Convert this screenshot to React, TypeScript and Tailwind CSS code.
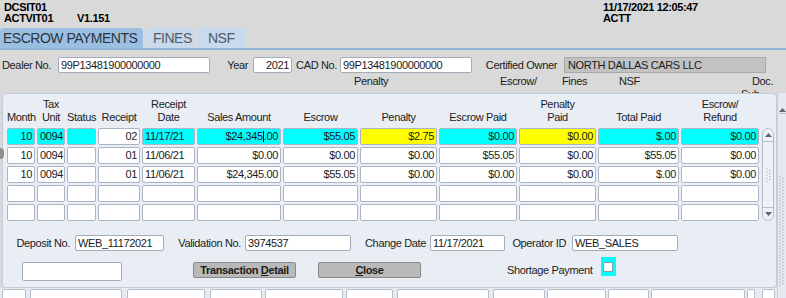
const CYAN = 'bg-[#00ffff]';
const YEL = 'bg-[#ffff00]';
const WHITE = 'bg-white';

type Row = string[];

const rows: Row[] = [
  ['10', '0094', '', '02', '11/17/21', '$24,345.00', '$55.05', '$2.75', '$0.00', '$0.00', '$.00', '$0.00'],
  ['10', '0094', '', '01', '11/06/21', '$0.00', '$0.00', '$0.00', '$55.05', '$0.00', '$55.05', '$0.00'],
  ['10', '0094', '', '01', '11/06/21', '$24,345.00', '$55.05', '$0.00', '$0.00', '$0.00', '$.00', '$0.00'],
  ['', '', '', '', '', '', '', '', '', '', '', ''],
  ['', '', '', '', '', '', '', '', '', '', '', ''],
];

const activeBg = [CYAN, CYAN, CYAN, WHITE, CYAN, CYAN, CYAN, YEL, CYAN, YEL, CYAN, CYAN];
const leftCols = [1, 4];

const headers: [string, string][] = [
  ['', 'Month'],
  ['Tax', 'Unit'],
  ['', 'Status'],
  ['', 'Receipt'],
  ['Receipt', 'Date'],
  ['', 'Sales Amount'],
  ['', 'Escrow'],
  ['', 'Penalty'],
  ['', 'Escrow Paid'],
  ['Penalty', 'Paid'],
  ['', 'Total Paid'],
  ['Escrow/', 'Refund'],
];

const strip = [
  'ml-[2px] w-[24px]',
  'ml-[4px] w-[92px]',
  'ml-[5px] w-[78px]',
  'ml-[5px] w-[52px]',
  'ml-[3px] w-[78px]',
  'ml-[3px] w-[47px]',
  'ml-[4px] w-[92px]',
  'ml-[4px] w-[52px]',
  'ml-[2px] w-[59px]',
  'ml-[2px] w-[41px]',
  'ml-[2px] w-[94px]',
  'ml-[2px] w-[8px]',
  'ml-[7px] w-[13px]',
];

const input = 'h-[16px] rounded-[2px] border border-[#a3acb8] bg-white px-[2px] leading-[14px]';

function Arrow({ up }: { up?: boolean }) {
  return (
    <svg width="7" height="4" viewBox="0 0 7 4">
      <path d={up ? 'M0 4 L3.5 0 L7 4 Z' : 'M0 0 L3.5 4 L7 0 Z'} fill="#5a6675" />
    </svg>
  );
}

function Grip({ h }: { h: number }) {
  const dots = [];
  for (let y = 1; y < h; y += 3) {
    dots.push(<circle key={'a' + y} cx="1" cy={y} r="0.7" fill="#aab3bf" />);
    dots.push(<circle key={'b' + y} cx="4" cy={y + 1.5} r="0.7" fill="#aab3bf" />);
  }
  return (
    <svg width="6" height={h}>
      {dots}
    </svg>
  );
}

function Cell({ text, idx, row }: { text: string; idx: number; row: number }) {
  const bg = row === 0 ? activeBg[idx] : WHITE;
  const align = leftCols.includes(idx) ? 'text-left pl-[2px]' : 'text-right pr-[2px]';
  const isCursor = row === 0 && idx === 5;
  return (
    <div className={`h-[17px] rounded-[2px] border border-[#aab4c2] leading-[15px] ${bg} ${align}`}>
      {isCursor ? (
        <>
          $24,345<span className="inline-block h-[11px] w-px bg-black align-[-2px]" />.00
        </>
      ) : (
        text
      )}
    </div>
  );
}

export default function App() {
  return (
    <div className="relative h-[298px] w-[786px] overflow-hidden bg-[#d9d9d9] font-['Liberation_Sans',Arial,sans-serif] text-[11px] tracking-[-0.35px] text-[#1b1b1b]">
      {/* header */}
      <div className="flex h-[28px] pt-[2px] font-bold leading-[11px] text-black">
        <div className="w-[603px] pl-[4px]">
          <div>DCSIT01</div>
          <div className="flex">
            <span className="w-[73px]">ACTVIT01</span>
            <span>V1.151</span>
          </div>
        </div>
        <div>
          <div>11/17/2021 12:05:47</div>
          <div>ACTT</div>
        </div>
      </div>

      {/* tabs */}
      <div className="flex h-[22px] items-end gap-[3px] border-b-2 border-[#8fb3d6] text-[14px] tracking-[-0.5px]">
        <div className="h-[20px] w-[143px] rounded-t-[4px] bg-[#9bbfe0] pl-[3px] leading-[21px] text-[#2b3440]">
          ESCROW PAYMENTS
        </div>
        <div className="h-[20px] w-[48px] rounded-t-[4px] bg-[#c7daee] pl-[7px] leading-[21px] text-[#505a66]">
          FINES
        </div>
        <div className="h-[20px] w-[48px] rounded-t-[4px] bg-[#c7daee] pl-[11px] leading-[21px] text-[#505a66]">
          NSF
        </div>
      </div>

      {/* header form */}
      <div className="h-[43px] overflow-hidden">
        <div className="mt-[7px] flex h-[16px] items-center">
          <div className="w-[58px] pl-[2px]">Dealer No.</div>
          <div className={`${input} w-[152px]`}>99P13481900000000</div>
          <div className="w-[43px] pr-[5px] text-right">Year</div>
          <div className={`${input} w-[39px] text-right`}>2021</div>
          <div className="w-[48px] pr-[3px] text-right">CAD No.</div>
          <div className={`${input} w-[132px]`}>99P13481900000000</div>
          <div className="w-[92px] pr-[7px] text-right">Certified Owner</div>
          <div className="h-[16px] w-[202px] border border-[#a9a9a9] bg-[#c2c2c2] pl-[3px] leading-[14px]">
            NORTH DALLAS CARS LLC
          </div>
        </div>
        <div className="mt-[2px] flex pl-[354px] leading-[13px]">
          <span className="w-[146px]">Penalty</span>
          <span className="w-[62px]">Escrow/</span>
          <span className="w-[57px]">Fines</span>
          <span className="w-[133px]">NSF</span>
          <span>Doc.</span>
        </div>
        <div className="pl-[741px] leading-[13px]">Sub-</div>
      </div>

      {/* body */}
      <div className="flex h-[205px]">
        <div className="w-[777px]">
          <div className="ml-[2px] h-[195px] w-[775px] rounded-[4px] border border-[#c2ccd9] bg-[#e9eef5]">
            {/* grid headers */}
            <div className="ml-[4px] mt-[4px] grid h-[26px] grid-cols-[28px_28px_29px_42px_53px_84px_75px_77px_78px_77px_81px_78px] items-end gap-x-[2px] text-center leading-[13px]">
              {headers.map(([a, b], i) => (
                <div key={i}>
                  {a && <div>{a}</div>}
                  <div className="whitespace-nowrap">{b}</div>
                </div>
              ))}
            </div>

            {/* grid rows */}
            <div className="ml-[4px] mt-[4px] grid auto-rows-[17px] grid-cols-[28px_28px_29px_42px_53px_84px_75px_77px_78px_77px_81px_78px_13px] gap-x-[2px] gap-y-[2px]">
              <div className="col-start-13 row-span-5 row-start-1 ml-[1px] flex flex-col rounded-[6px] border border-[#b3bdcb] bg-[#eef2f7]">
                <div className="flex h-[13px] items-center justify-center border-b border-[#b3bdcb]">
                  <Arrow up />
                </div>
                <div className="flex flex-1 items-center justify-end pr-[1px]">
                  <Grip h={14} />
                </div>
                <div className="flex h-[13px] items-center justify-center border-t border-[#b3bdcb]">
                  <Arrow />
                </div>
              </div>
              {rows.map((r, ri) => r.map((t, ci) => <Cell key={ri + '-' + ci} text={t} idx={ci} row={ri} />))}
            </div>

            {/* footer fields */}
            <div className="mt-[14px] flex h-[16px] items-center">
              <div className="w-[72px] pr-[5px] text-right">Deposit No.</div>
              <div className={`${input} w-[89px]`}>WEB_11172021</div>
              <div className="w-[81px] pr-[4px] text-right">Validation No.</div>
              <div className={`${input} w-[106px]`}>3974537</div>
              <div className="w-[79px] pr-[4px] text-right">Change Date</div>
              <div className={`${input} w-[75px]`}>11/17/2021</div>
              <div className="w-[67px] pr-[6px] text-right">Operator ID</div>
              <div className={`${input} w-[106px]`}>WEB_SALES</div>
            </div>
            <div className="mt-[6px] flex items-start">
              <div className="ml-[19px] mt-[5px] h-[19px] w-[100px] rounded-[2px] border border-[#a3acb8] bg-white" />
              <button className="ml-[71px] mt-[5px] h-[16px] w-[103px] rounded-[2px] border border-[#8a8a8a] bg-[#b9b9b9] text-center font-bold leading-[14px] tracking-[-0.35px] text-[#1b1b1b]">
                Transaction <span className="underline">D</span>etail
              </button>
              <button className="ml-[22px] mt-[5px] h-[16px] w-[103px] rounded-[2px] border border-[#8a8a8a] bg-[#b9b9b9] text-center font-bold leading-[14px] tracking-[-0.35px] text-[#1b1b1b]">
                <span className="underline">C</span>lose
              </button>
              <div className="ml-[86px] mt-[7px] leading-[13px]">Shortage Payment</div>
              <div className="ml-[8px] flex h-[19px] w-[15px] items-center justify-center bg-[#00ffff]">
                <div className="h-[10px] w-[10px] rounded-[1px] border border-[#8c96a3] bg-white" />
              </div>
            </div>
          </div>

          {/* partial grid below */}
          <div className="flex h-[10px] bg-[#e6ebf2]">
            {strip.map((c, i) => (
              <div key={i} className={`mt-[1px] h-[12px] rounded-[2px] border border-[#b5becb] bg-white ${c}`} />
            ))}
          </div>
        </div>

        {/* outer scrollbar */}
        <div className="flex w-[9px] flex-col items-center border-l border-[#c8d0db] bg-[#e4e9f0] pt-[15px]">
          <div className="border-b border-[#b3bdcb] pb-[1px]">
            <Arrow up />
          </div>
          <div className="mt-[62px]">
            <Grip h={110} />
          </div>
        </div>
      </div>

      {/* current-row indicator */}
      <div className="absolute left-0 top-[148px] h-[11px] w-[4px] rounded-r-full bg-[#8e8e8e]" />
    </div>
  );
}
